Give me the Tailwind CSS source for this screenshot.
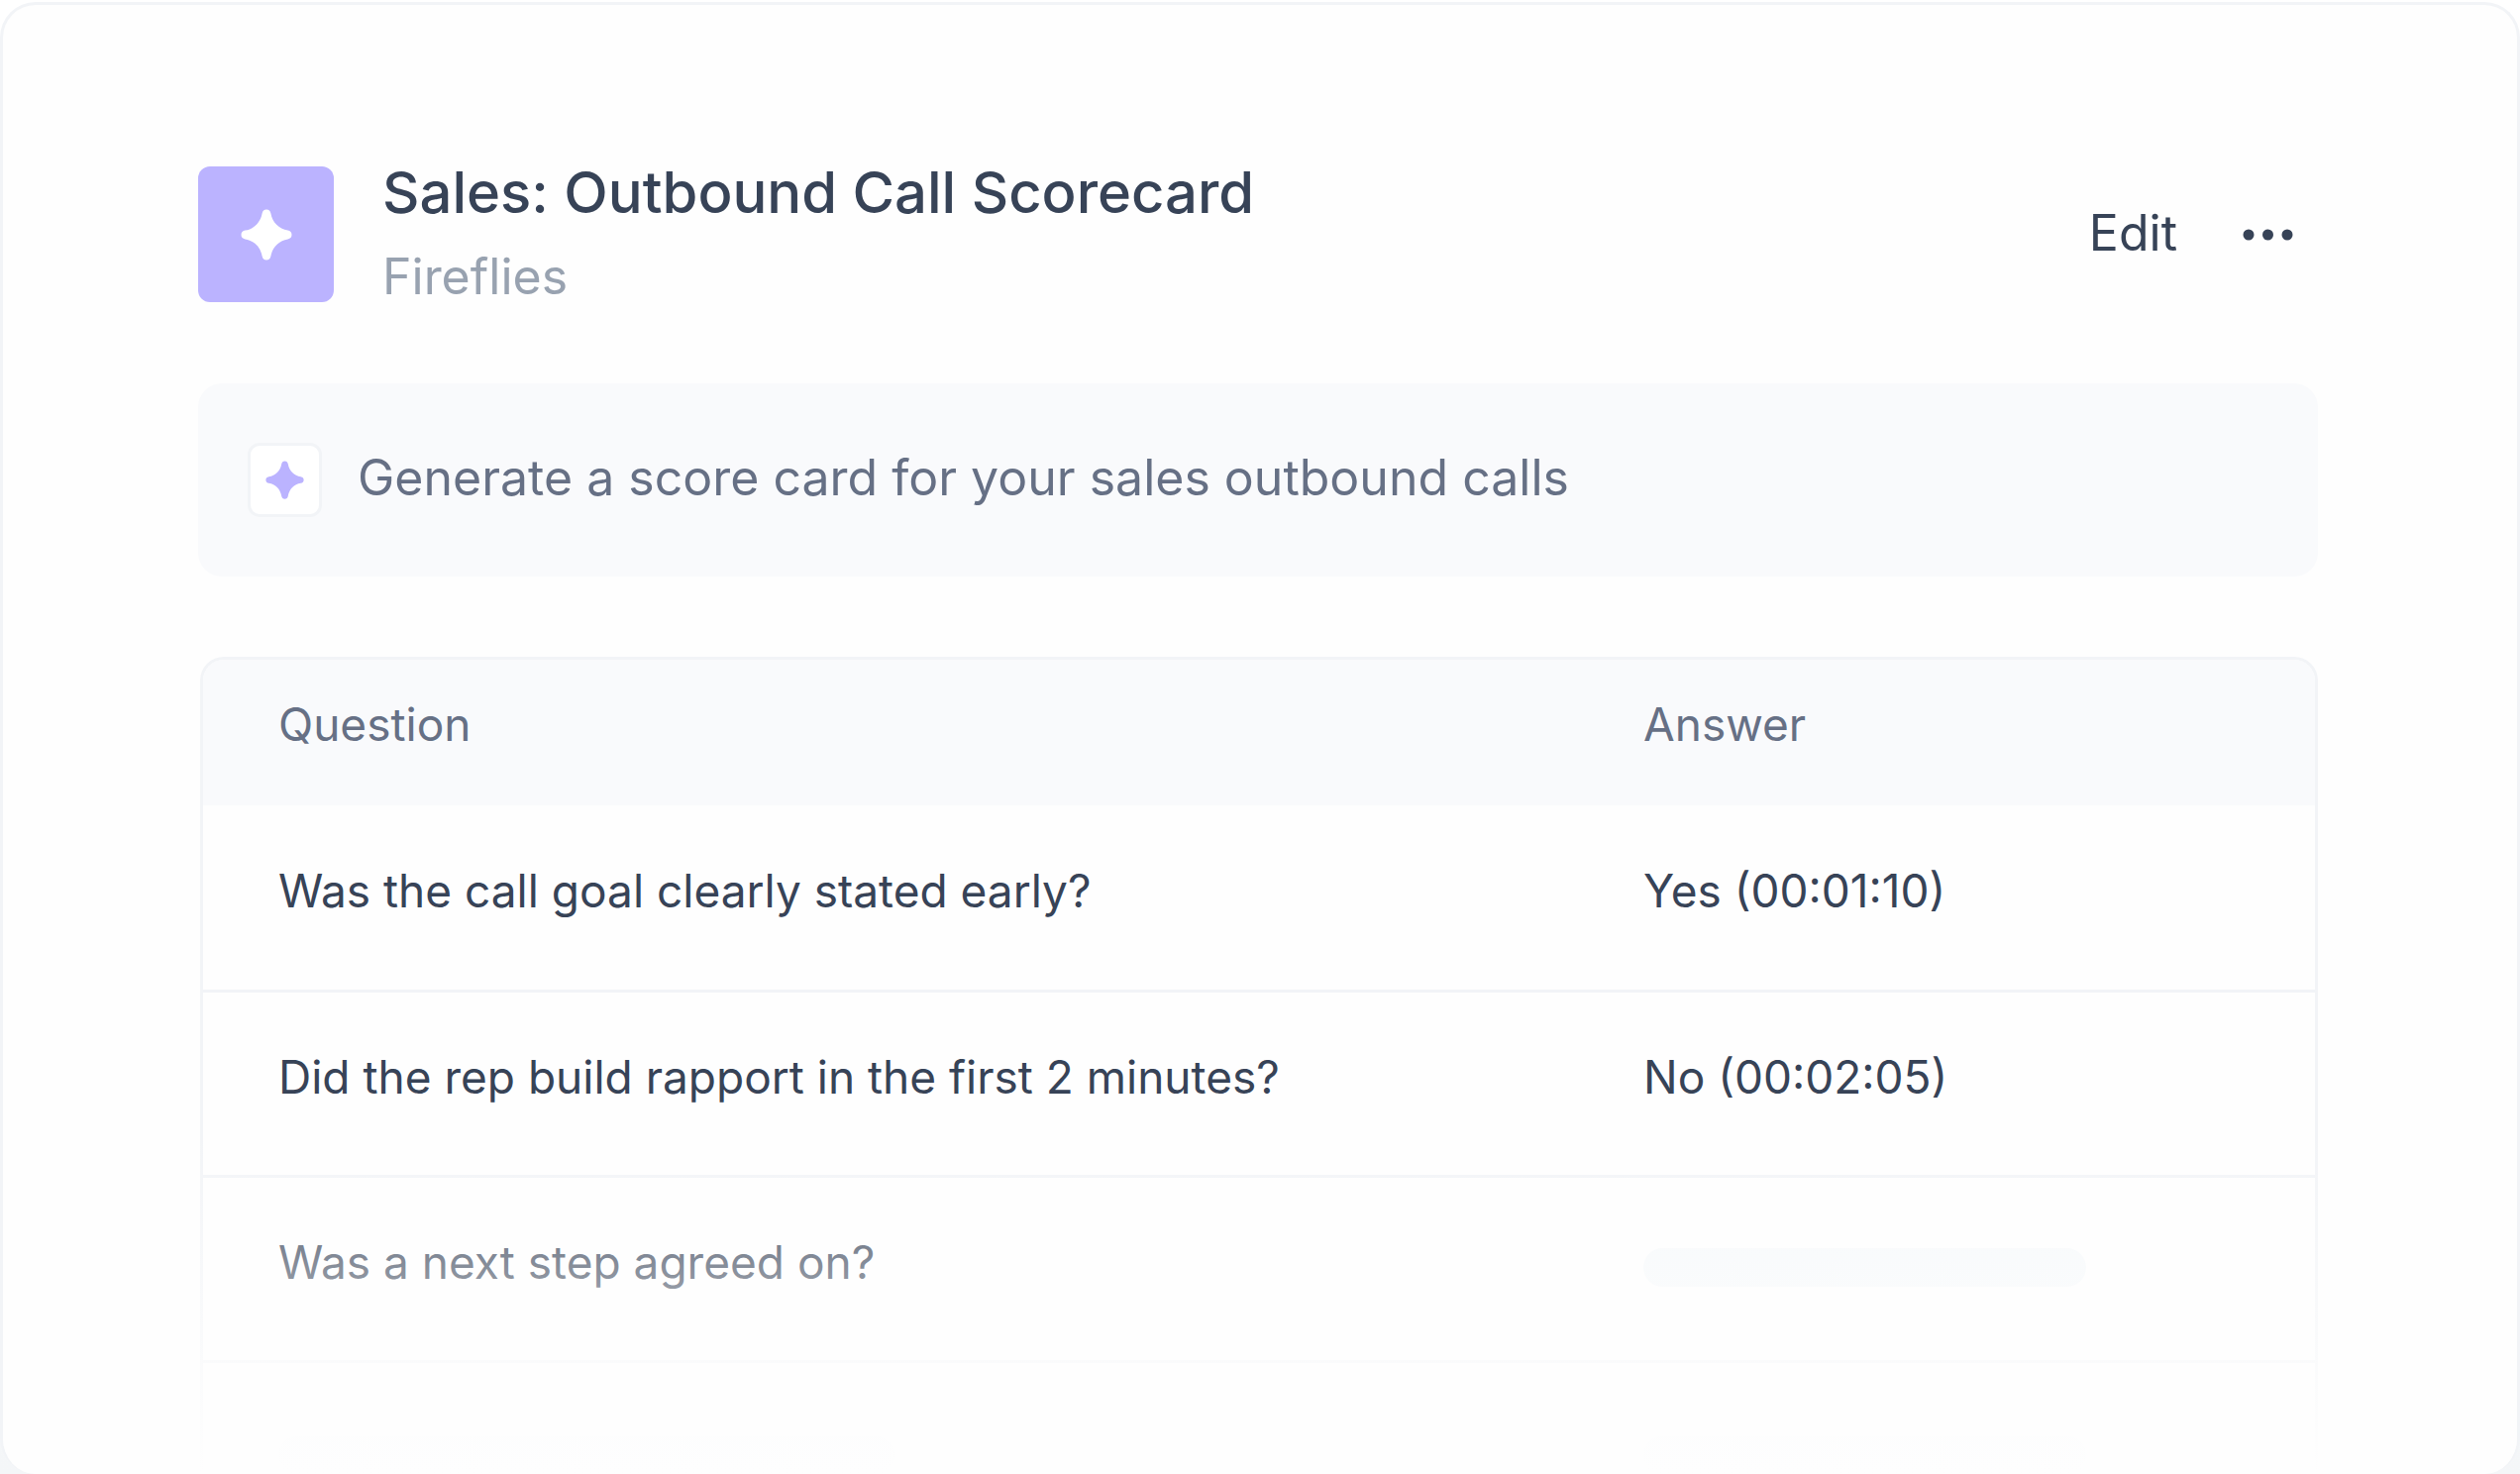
<!DOCTYPE html>
<html lang="en">
<head>
    <meta charset="UTF-8">
    <meta name="viewport" content="width=device-width, initial-scale=1.0">
    <title>Sales: Outbound Call Scorecard</title>
    <script src="https://cdn.jsdelivr.net/npm/@tailwindcss/browser@4"></script>
    <style>
        body {
            font-family: 'Inter', sans-serif;
        }
    </style>
</head>
<body class="bg-linear-to-b from-white from-50% to-[#f4f6f8] min-h-screen flex flex-col pt-[2px] text-[#374357]">
    <main class="relative grow flex flex-col border-[3px] border-b-0 border-[#f2f4f7] rounded-[36px] bg-[#fefefe] overflow-hidden pt-[163px] pl-[197px] pr-[201px]">
        <!-- Header -->
        <header class="flex items-center">
            <div class="w-[137px] h-[137px] shrink-0 rounded-xl bg-[#bbb3ff] flex items-center justify-center">
                <svg class="w-[52px] h-[52px] text-white" viewBox="0 0 52 52" fill="currentColor" aria-hidden="true">
                    <path d="M26 .5c2.400 0 3.900 1.500 4.400 4C32 13.500 38.500 20 47.500 21.600c2.500.5 4 2 4 4.400s-1.500 3.900-4 4.400C38.500 32 32 38.500 30.400 47.500c-.5 2.500-2 4-4.400 4s-3.900-1.500-4.400-4C20 38.500 13.500 32 4.500 30.400c-2.500-.5-4-2-4-4.400s1.500-3.900 4-4.400C13.500 20 20 13.500 21.600 4.500c.5-2.500 2-4 4.400-4z"/>
                </svg>
            </div>
            <div class="ml-[49px] grow">
                <h1 class="text-[58px] leading-[52px] font-medium">Sales: Outbound Call Scorecard</h1>
                <p class="text-[50px] leading-[52px] mt-[33px] text-[#98a2b0]">Fireflies</p>
            </div>
            <div class="flex items-center gap-[66px] pr-[24px]">
                <button type="button" class="pb-[4px] text-[50px] leading-[60px]">Edit</button>
                <button type="button" aria-label="More options">
                    <svg class="w-[52px] h-[12px]" viewBox="0 0 52 12" fill="currentColor" aria-hidden="true">
                        <circle cx="6" cy="6" r="5.500"/>
                        <circle cx="25.500" cy="6" r="5.500"/>
                        <circle cx="45" cy="6" r="5.500"/>
                    </svg>
                </button>
            </div>
        </header>

        <!-- Prompt -->
        <section class="mt-[82px] h-[195px] flex items-center rounded-3xl bg-[#f9fafc] px-[50px]">
            <div class="w-[75px] h-[75px] shrink-0 rounded-xl border-[3px] border-[#f2f4f7] bg-white flex items-center justify-center">
                <svg class="w-[39px] h-[39px] text-[#bbb3ff]" viewBox="0 0 52 52" fill="currentColor" aria-hidden="true">
                    <path d="M26 .5c2.400 0 3.900 1.500 4.400 4C32 13.500 38.500 20 47.500 21.600c2.500.5 4 2 4 4.400s-1.500 3.900-4 4.400C38.500 32 32 38.500 30.400 47.500c-.5 2.500-2 4-4.400 4s-3.900-1.500-4.400-4C20 38.500 13.500 32 4.500 30.400c-2.500-.5-4-2-4-4.400s1.500-3.900 4-4.400C13.500 20 20 13.500 21.600 4.500c.5-2.500 2-4 4.400-4z"/>
                </svg>
            </div>
            <p class="ml-[36px] pb-[6px] text-[50px] leading-[60px] text-[#667085]">Generate a score card for your sales outbound calls</p>
        </section>

        <!-- Questions -->
        <section class="mt-[81px] ml-[2px] border-[3px] border-b-0 border-[#f2f4f7] rounded-t-3xl overflow-hidden">
            <table class="w-full table-fixed text-left text-[46px] leading-[56px]">
                <thead class="bg-[#f9fafc] text-[#667085]">
                    <tr class="h-[147px]">
                        <th class="w-[68.2%] pl-[76px] pb-[18px] font-normal">Question</th>
                        <th class="pb-[18px] font-normal">Answer</th>
                    </tr>
                </thead>
                <tbody>
                    <tr class="h-[187px] border-b-[3px] border-[#f2f4f7]">
                        <td class="pl-[76px] pb-[14px]">Was the call goal clearly stated early?</td>
                        <td class="pb-[14px]">Yes (00:01:10)</td>
                    </tr>
                    <tr class="h-[187px] border-b-[3px] border-[#f2f4f7]">
                        <td class="pl-[76px] pb-[14px]">Did the rep build rapport in the first 2 minutes?</td>
                        <td class="pb-[14px]">No (00:02:05)</td>
                    </tr>
                    <tr class="h-[187px] border-b-[3px] border-[#f2f4f7]">
                        <td class="pl-[76px] pb-[14px]">Was a next step agreed on?</td>
                        <td class="pb-[2px]"><div class="w-[447px] h-[39px] rounded-full bg-[#f6f9fb]"></div></td>
                    </tr>
                    <tr>
                        <td class="pl-[76px] pt-[74px]"><div class="w-[622px] h-[38px] rounded-full bg-[#f6f9fb]"></div></td>
                        <td class="pt-[74px]"><div class="w-[447px] h-[38px] rounded-full bg-[#f6f9fb]"></div></td>
                    </tr>
                </tbody>
            </table>
        </section>

        <!-- Fade at the foot of the card -->
        <div class="absolute inset-x-0 bottom-0 h-[350px] bg-linear-to-b from-[#fefefe]/0 to-[#fefefe] pointer-events-none"></div>
    </main>
</body>
</html>
